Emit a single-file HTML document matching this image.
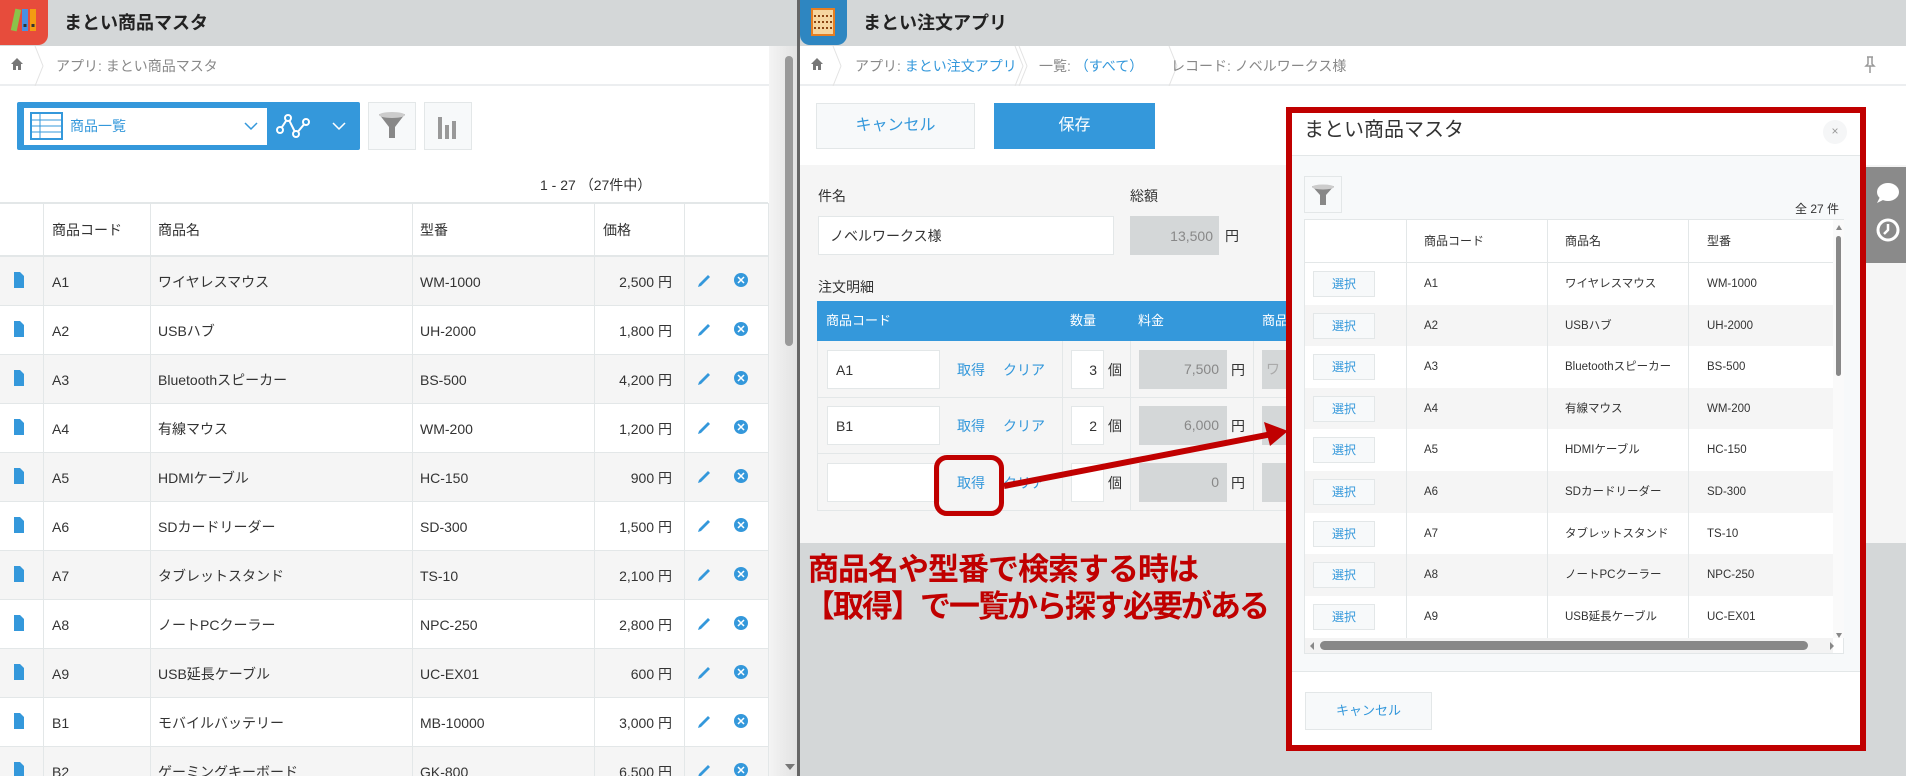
<!DOCTYPE html>
<html><head><meta charset="utf-8"><style>
*{box-sizing:border-box;margin:0;padding:0}
html{width:1906px;height:776px;overflow:hidden}
body{width:1906px;height:776px;overflow:hidden;position:relative;background:#d4d7d8;font-family:"Liberation Sans","Noto Sans CJK JP",sans-serif;color:#333;font-size:14px;line-height:20px}
#w{position:absolute;left:0;top:0;width:1906px;height:776px;overflow:hidden}
.a{position:absolute}
.hdr{background:#d4d7d8;height:46px}
.t{position:absolute;white-space:nowrap;line-height:20px}
.blue{color:#3498db}
.row{position:absolute;left:0;width:768px;height:49px}
.row .t{top:15px}
.mrow{position:absolute;left:1305px;width:528px;height:41.6px;font-size:11.5px}
.mrow .t{top:13px;line-height:16px}
.sel{position:absolute;left:8px;top:8px;width:62px;height:26px;border:1px solid #e3e7e8;background:#f7f9fa;color:#3498db;text-align:center;line-height:24px;font-size:12px}
</style></head><body><div id="w">
<!-- LEFT PANEL -->
<div class="a" style="left:0;top:0;width:797px;height:776px;background:#fff"></div>
<div class="a hdr" style="left:0;top:0;width:797px"></div>
<div class="a" style="left:0;top:0;width:48px;height:45px;background:#e74c3c;border-radius:0 0 10px 0"></div>
<svg class="a" style="left:10px;top:6px" width="30" height="30" viewBox="0 0 30 30"><rect x="3" y="3" width="6" height="22" fill="#8bc34a" transform="rotate(12 6 14)"/><rect x="12" y="3" width="6" height="22" fill="#4a90e2"/><rect x="20" y="3" width="6" height="22" fill="#f39c12"/><rect x="13.5" y="18" width="3" height="3" fill="#333"/><rect x="21.5" y="18" width="3" height="3" fill="#333"/></svg>
<div class="t" style="left:64px;top:11px;font-size:18px;font-weight:bold;color:#222;line-height:24px">まとい商品マスタ</div>
<div class="a" style="left:0;top:84px;width:784px;height:2px;background:#eceef0"></div>
<svg class="a" style="left:10px;top:57px" width="14" height="14" viewBox="0 0 14 14"><path d="M7 1L1 7h2v6h3V9h2v4h3V7h2z" fill="#777"/></svg>
<svg class="a" style="left:34px;top:46px" width="10" height="40"><path d="M1 0L9 20L1 40" stroke="#e3e3e3" fill="none"/></svg>
<div class="t" style="left:56px;top:56px;font-size:14px;color:#888">アプリ: まとい商品マスタ</div>
<div class="a" style="left:17px;top:102px;width:343px;height:48px;background:#3498db;border-radius:2px"></div>
<div class="a" style="left:24px;top:108px;width:243px;height:37px;background:#fff"></div>
<svg class="a" style="left:30px;top:112px" width="33" height="28"><rect x="1" y="1" width="31" height="26" fill="#fff" stroke="#3498db" stroke-width="2"/><path d="M1 8h31M1 14h31M1 20h31M10 1v26" stroke="#3498db"/></svg>
<div class="t blue" style="left:70px;top:116px;font-size:14px">商品一覧</div>
<svg class="a" style="left:244px;top:121px" width="14" height="10"><path d="M1 2l6 6 6-6" stroke="#3498db" fill="none" stroke-width="1.5"/></svg>
<svg class="a" style="left:276px;top:112px" width="44" height="30"><path d="M4 18L12 6L20 22L30 10" stroke="#fff" stroke-width="2" fill="none"/><circle cx="4" cy="18" r="3" fill="#3498db" stroke="#fff" stroke-width="2"/><circle cx="12" cy="6" r="3" fill="#3498db" stroke="#fff" stroke-width="2"/><circle cx="20" cy="22" r="3" fill="#3498db" stroke="#fff" stroke-width="2"/><circle cx="30" cy="10" r="3" fill="#3498db" stroke="#fff" stroke-width="2"/></svg>
<svg class="a" style="left:332px;top:121px" width="14" height="10"><path d="M1 2l6 6 6-6" stroke="#fff" fill="none" stroke-width="1.5"/></svg>
<div class="a" style="left:368px;top:102px;width:48px;height:48px;background:#f7f9fa;border:1px solid #e3e7e8"></div>
<svg class="a" style="left:376px;top:110px" width="32" height="32"><path d="M3 4h26L19 17v11h-6V17z" fill="#888"/><ellipse cx="16" cy="5" rx="13" ry="3" fill="#ccc"/></svg>
<div class="a" style="left:424px;top:102px;width:48px;height:48px;background:#f7f9fa;border:1px solid #e3e7e8"></div>
<svg class="a" style="left:436px;top:113px" width="24" height="26"><rect x="2" y="4" width="4" height="22" fill="#999"/><rect x="9" y="12" width="4" height="14" fill="#999"/><rect x="16" y="8" width="4" height="18" fill="#999"/></svg>
<div class="t" style="left:540px;top:175px;font-size:14px">1 - 27 （27件中）</div>
<!-- left table -->
<div class="a" style="left:0;top:202px;width:768px;height:2px;background:#e3e7e8"></div>
<div class="t" style="left:52px;top:220px">商品コード</div>
<div class="t" style="left:158px;top:220px">商品名</div>
<div class="t" style="left:420px;top:220px">型番</div>
<div class="t" style="left:603px;top:220px">価格</div>
<div class="a" style="left:0;top:255px;width:768px;height:2px;background:#e3e7e8"></div>
<div class="row" style="top:257px;background:#f5f5f5"><div class="t" style="left:52px">A1</div><div class="t" style="left:158px">ワイヤレスマウス</div><div class="t" style="left:420px">WM-1000</div><div class="t" style="right:96px">2,500 円</div></div>
<div class="row" style="top:306px"><div class="t" style="left:52px">A2</div><div class="t" style="left:158px">USBハブ</div><div class="t" style="left:420px">UH-2000</div><div class="t" style="right:96px">1,800 円</div></div>
<div class="row" style="top:355px;background:#f5f5f5"><div class="t" style="left:52px">A3</div><div class="t" style="left:158px">Bluetoothスピーカー</div><div class="t" style="left:420px">BS-500</div><div class="t" style="right:96px">4,200 円</div></div>
<div class="row" style="top:404px"><div class="t" style="left:52px">A4</div><div class="t" style="left:158px">有線マウス</div><div class="t" style="left:420px">WM-200</div><div class="t" style="right:96px">1,200 円</div></div>
<div class="row" style="top:453px;background:#f5f5f5"><div class="t" style="left:52px">A5</div><div class="t" style="left:158px">HDMIケーブル</div><div class="t" style="left:420px">HC-150</div><div class="t" style="right:96px">900 円</div></div>
<div class="row" style="top:502px"><div class="t" style="left:52px">A6</div><div class="t" style="left:158px">SDカードリーダー</div><div class="t" style="left:420px">SD-300</div><div class="t" style="right:96px">1,500 円</div></div>
<div class="row" style="top:551px;background:#f5f5f5"><div class="t" style="left:52px">A7</div><div class="t" style="left:158px">タブレットスタンド</div><div class="t" style="left:420px">TS-10</div><div class="t" style="right:96px">2,100 円</div></div>
<div class="row" style="top:600px"><div class="t" style="left:52px">A8</div><div class="t" style="left:158px">ノートPCクーラー</div><div class="t" style="left:420px">NPC-250</div><div class="t" style="right:96px">2,800 円</div></div>
<div class="row" style="top:649px;background:#f5f5f5"><div class="t" style="left:52px">A9</div><div class="t" style="left:158px">USB延長ケーブル</div><div class="t" style="left:420px">UC-EX01</div><div class="t" style="right:96px">600 円</div></div>
<div class="row" style="top:698px"><div class="t" style="left:52px">B1</div><div class="t" style="left:158px">モバイルバッテリー</div><div class="t" style="left:420px">MB-10000</div><div class="t" style="right:96px">3,000 円</div></div>
<div class="row" style="top:747px;height:29px;background:#f5f5f5"><div class="t" style="left:52px">B2</div><div class="t" style="left:158px">ゲーミングキーボード</div><div class="t" style="left:420px">GK-800</div><div class="t" style="right:96px">6,500 円</div></div>
<svg class="a" style="left:0;top:203px" width="769" height="573">
<g stroke="#e3e7e8"><path d="M43.5 0v573M150.5 0v573M412.5 0v573M594.5 0v573M684.5 0v573M768.5 0v573"/>
<path d="M0 102.5h768M0 151.5h768M0 200.5h768M0 249.5h768M0 298.5h768M0 347.5h768M0 396.5h768M0 445.5h768M0 494.5h768M0 543.5h768"/></g>
<g fill="#3498db">
<g transform="translate(0,69)"><path d="M14 0h6l4 4v12H14z"/><path d="M699 12l9-9 2 2-9 9-3 1z"/><circle cx="741" cy="8" r="7"/><path d="M738 5l6 6M744 5l-6 6" stroke="#fff" stroke-width="1.5"/></g>
<g transform="translate(0,118)"><path d="M14 0h6l4 4v12H14z"/><path d="M699 12l9-9 2 2-9 9-3 1z"/><circle cx="741" cy="8" r="7"/><path d="M738 5l6 6M744 5l-6 6" stroke="#fff" stroke-width="1.5"/></g>
<g transform="translate(0,167)"><path d="M14 0h6l4 4v12H14z"/><path d="M699 12l9-9 2 2-9 9-3 1z"/><circle cx="741" cy="8" r="7"/><path d="M738 5l6 6M744 5l-6 6" stroke="#fff" stroke-width="1.5"/></g>
<g transform="translate(0,216)"><path d="M14 0h6l4 4v12H14z"/><path d="M699 12l9-9 2 2-9 9-3 1z"/><circle cx="741" cy="8" r="7"/><path d="M738 5l6 6M744 5l-6 6" stroke="#fff" stroke-width="1.5"/></g>
<g transform="translate(0,265)"><path d="M14 0h6l4 4v12H14z"/><path d="M699 12l9-9 2 2-9 9-3 1z"/><circle cx="741" cy="8" r="7"/><path d="M738 5l6 6M744 5l-6 6" stroke="#fff" stroke-width="1.5"/></g>
<g transform="translate(0,314)"><path d="M14 0h6l4 4v12H14z"/><path d="M699 12l9-9 2 2-9 9-3 1z"/><circle cx="741" cy="8" r="7"/><path d="M738 5l6 6M744 5l-6 6" stroke="#fff" stroke-width="1.5"/></g>
<g transform="translate(0,363)"><path d="M14 0h6l4 4v12H14z"/><path d="M699 12l9-9 2 2-9 9-3 1z"/><circle cx="741" cy="8" r="7"/><path d="M738 5l6 6M744 5l-6 6" stroke="#fff" stroke-width="1.5"/></g>
<g transform="translate(0,412)"><path d="M14 0h6l4 4v12H14z"/><path d="M699 12l9-9 2 2-9 9-3 1z"/><circle cx="741" cy="8" r="7"/><path d="M738 5l6 6M744 5l-6 6" stroke="#fff" stroke-width="1.5"/></g>
<g transform="translate(0,461)"><path d="M14 0h6l4 4v12H14z"/><path d="M699 12l9-9 2 2-9 9-3 1z"/><circle cx="741" cy="8" r="7"/><path d="M738 5l6 6M744 5l-6 6" stroke="#fff" stroke-width="1.5"/></g>
<g transform="translate(0,510)"><path d="M14 0h6l4 4v12H14z"/><path d="M699 12l9-9 2 2-9 9-3 1z"/><circle cx="741" cy="8" r="7"/><path d="M738 5l6 6M744 5l-6 6" stroke="#fff" stroke-width="1.5"/></g>
<g transform="translate(0,559)"><path d="M14 0h6l4 4v12H14z"/><path d="M699 12l9-9 2 2-9 9-3 1z"/><circle cx="741" cy="8" r="7"/><path d="M738 5l6 6M744 5l-6 6" stroke="#fff" stroke-width="1.5"/></g>
</g></svg>
<div class="a" style="left:769px;top:46px;width:28px;height:730px;background:linear-gradient(90deg,#f4f4f4,#e2e2e2)"></div>
<div class="a" style="left:785px;top:56px;width:8px;height:290px;background:#9a9a9a;border-radius:4px"></div>
<svg class="a" style="left:784px;top:762px" width="12" height="10"><path d="M1 2h10L6 8z" fill="#777"/></svg>
<div class="a" style="left:797px;top:0;width:3px;height:776px;background:#666"></div>
<!-- RIGHT PANEL -->
<div class="a" style="left:800px;top:0;width:1106px;height:165px;background:#fff"></div>
<div class="a hdr" style="left:800px;top:0;width:1106px"></div>
<div class="a" style="left:800px;top:0;width:47px;height:45px;background:#2e86c1;border-radius:0 0 10px 10px"></div>
<svg class="a" style="left:810px;top:7px" width="26" height="30"><rect x="2" y="2" width="22" height="26" fill="#f5d6a0" stroke="#e67e22" stroke-width="2"/><path d="M4 9h18M4 15h18M4 21h18" stroke="#8b4513" stroke-width="2" stroke-dasharray="2 2"/></svg>
<div class="t" style="left:863px;top:11px;font-size:18px;font-weight:bold;color:#222;line-height:24px">まとい注文アプリ</div>
<div class="a" style="left:800px;top:84px;width:1106px;height:2px;background:#eceef0"></div>
<svg class="a" style="left:810px;top:57px" width="14" height="14" viewBox="0 0 14 14"><path d="M7 1L1 7h2v6h3V9h2v4h3V7h2z" fill="#777"/></svg>
<svg class="a" style="left:832px;top:46px" width="200" height="40"><path d="M1 0L9 20L1 40M183 0L191 20L183 40" stroke="#e3e3e3" fill="none"/></svg>
<svg class="a" style="left:1018px;top:46px" width="160" height="40"><path d="M1 0L9 20L1 40M151 0L159 20L151 40" stroke="#e3e3e3" fill="none"/></svg>
<div class="t" style="left:855px;top:56px;color:#888">アプリ: <span class="blue">まとい注文アプリ</span></div>
<div class="t" style="left:1039px;top:56px;color:#888">一覧: <span class="blue">（すべて）</span></div>
<div class="t" style="left:1171px;top:56px;color:#888">レコード: ノベルワークス様</div>
<svg class="a" style="left:1864px;top:56px" width="12" height="18"><path d="M3 1h6M4 1v7L2 10h8L8 8V1M6 10v7" stroke="#999" stroke-width="1.5" fill="none"/></svg>
<div class="a" style="left:816px;top:103px;width:159px;height:46px;background:#f7f9fa;border:1px solid #e3e7e8;color:#3498db;font-size:16px;text-align:center;line-height:44px">キャンセル</div>
<div class="a" style="left:994px;top:103px;width:161px;height:46px;background:#3498db;color:#fff;font-size:16px;text-align:center;line-height:46px">保存</div>
<div class="a" style="left:800px;top:165px;width:1106px;height:378px;background:#f5f5f5"></div>
<div class="t" style="left:818px;top:186px">件名</div>
<div class="t" style="left:1130px;top:186px">総額</div>
<div class="a" style="left:818px;top:216px;width:296px;height:39px;background:#fff;border:1px solid #e3e7e8"></div>
<div class="t" style="left:830px;top:226px">ノベルワークス様</div>
<div class="a" style="left:1130px;top:216px;width:89px;height:39px;background:#d4d7d8"></div>
<div class="t" style="left:1130px;top:226px;width:83px;text-align:right;color:#888">13,500</div>
<div class="t" style="left:1225px;top:226px">円</div>
<div class="t" style="left:818px;top:277px">注文明細</div>
<div class="a" style="left:817px;top:301px;width:472px;height:40px;background:#3498db"></div>
<div class="t" style="left:826px;top:311px;color:#fff;font-size:13px">商品コード</div>
<div class="t" style="left:1070px;top:311px;color:#fff;font-size:13px">数量</div>
<div class="t" style="left:1138px;top:311px;color:#fff;font-size:13px">料金</div>
<div class="t" style="left:1262px;top:311px;color:#fff;font-size:13px">商品</div>
<svg class="a" style="left:817px;top:341px" width="472" height="170"><g stroke="#e3e7e8" fill="none"><path d="M0.5 0v169.5h472M245.5 0v170M313.5 0v170M436.5 0v170M0 56.5h472M0 112.5h472"/></g></svg>
<div class="a" style="left:827px;top:350px;width:113px;height:39px;background:#fff;border:1px solid #e3e7e8"></div>
<div class="a" style="left:827px;top:406px;width:113px;height:39px;background:#fff;border:1px solid #e3e7e8"></div>
<div class="a" style="left:827px;top:463px;width:113px;height:39px;background:#fff;border:1px solid #e3e7e8"></div>
<div class="t" style="left:836px;top:360px">A1</div>
<div class="t" style="left:836px;top:416px">B1</div>
<div class="t blue" style="left:957px;top:360px">取得</div><div class="t blue" style="left:1003px;top:360px">クリア</div>
<div class="t blue" style="left:957px;top:416px">取得</div><div class="t blue" style="left:1003px;top:416px">クリア</div>
<div class="t blue" style="left:957px;top:473px">取得</div><div class="t blue" style="left:1003px;top:473px">クリア</div>
<div class="a" style="left:1071px;top:350px;width:33px;height:39px;background:#fff;border:1px solid #e3e7e8;text-align:right;padding:9px 6px 0 0">3</div>
<div class="a" style="left:1071px;top:406px;width:33px;height:39px;background:#fff;border:1px solid #e3e7e8;text-align:right;padding:9px 6px 0 0">2</div>
<div class="a" style="left:1071px;top:463px;width:33px;height:39px;background:#fff;border:1px solid #e3e7e8"></div>
<div class="t" style="left:1108px;top:360px">個</div><div class="t" style="left:1108px;top:416px">個</div><div class="t" style="left:1108px;top:473px">個</div>
<div class="a" style="left:1139px;top:350px;width:88px;height:39px;background:#d4d7d8;color:#888;text-align:right;padding:9px 8px 0 0">7,500</div>
<div class="a" style="left:1139px;top:406px;width:88px;height:39px;background:#d4d7d8;color:#888;text-align:right;padding:9px 8px 0 0">6,000</div>
<div class="a" style="left:1139px;top:463px;width:88px;height:39px;background:#d4d7d8;color:#888;text-align:right;padding:9px 8px 0 0">0</div>
<div class="t" style="left:1231px;top:360px">円</div><div class="t" style="left:1231px;top:416px">円</div><div class="t" style="left:1231px;top:473px">円</div>
<div class="a" style="left:1262px;top:350px;width:27px;height:39px;background:#d4d7d8;color:#aaa;padding:9px 0 0 4px;overflow:hidden">ワ</div>
<div class="a" style="left:1262px;top:406px;width:27px;height:39px;background:#d4d7d8"></div>
<div class="a" style="left:1262px;top:463px;width:27px;height:39px;background:#d4d7d8"></div>
<!-- side icons -->
<div class="a" style="left:1866px;top:167px;width:40px;height:96px;background:#8a8a8a"></div>
<svg class="a" style="left:1872px;top:180px" width="30" height="70"><ellipse cx="16" cy="12" rx="11" ry="9" fill="#fff"/><path d="M8 17l-3 6 8-4z" fill="#fff"/><circle cx="16" cy="50" r="10" fill="none" stroke="#fff" stroke-width="3"/><path d="M16 44v6l-4 4" stroke="#fff" stroke-width="2.5" fill="none"/></svg>
<!-- annotation text -->
<div class="t" style="left:808px;top:552px;font-size:31px;font-weight:bold;color:#c00000;letter-spacing:-1px;line-height:36px">商品名や型番で検索する時は</div>
<div class="t" style="left:804px;top:589px;font-size:31px;font-weight:bold;color:#c00000;letter-spacing:-2px;line-height:36px">【取得】で一覧から探す必要がある</div>
<!-- red box + arrow -->
<div class="a" style="left:934px;top:455px;width:70px;height:61px;border:5px solid #c00000;border-radius:13px"></div>
<svg class="a" style="left:1000px;top:420px" width="300" height="80"><path d="M4 66L272 14" stroke="#c00000" stroke-width="6"/><path d="M288 11L264 2L270 26z" fill="#c00000"/></svg>
<!-- MODAL -->
<div class="a" style="left:1286px;top:107px;width:580px;height:644px;background:#fff;border:6px solid #c00000"></div>
<div class="t" style="left:1304px;top:117px;font-size:20px;color:#333;line-height:26px">まとい商品マスタ</div>
<div class="a" style="left:1823px;top:120px;width:24px;height:24px;border-radius:12px;background:#f5f6f7;color:#999;text-align:center;line-height:22px;font-size:12px">×</div>
<div class="a" style="left:1292px;top:155px;width:568px;height:517px;background:#f7f9fa;border-top:1px solid #e3e7e8;border-bottom:1px solid #e3e7e8"></div>
<div class="a" style="left:1304px;top:176px;width:38px;height:37px;background:#f7f9fa;border:1px solid #e3e7e8"></div>
<svg class="a" style="left:1310px;top:182px" width="26" height="26"><path d="M2 4h22L16 13v10h-6V13z" fill="#888"/><ellipse cx="13" cy="5" rx="11" ry="2.5" fill="#ccc"/></svg>
<div class="t" style="left:1795px;top:199px;font-size:12px">全 27 件</div>
<div class="a" style="left:1304px;top:219px;width:540px;height:435px;background:#fff;border:1px solid #e3e7e8"></div>
<div class="t" style="left:1424px;top:231px;font-size:12px">商品コード</div>
<div class="t" style="left:1565px;top:231px;font-size:12px">商品名</div>
<div class="t" style="left:1707px;top:231px;font-size:12px">型番</div>
<div class="mrow" style="top:263px"><div class="sel">選択</div><div class="t" style="left:119px">A1</div><div class="t" style="left:260px">ワイヤレスマウス</div><div class="t" style="left:402px">WM-1000</div></div>
<div class="mrow" style="top:304.6px;background:#f5f5f5"><div class="sel">選択</div><div class="t" style="left:119px">A2</div><div class="t" style="left:260px">USBハブ</div><div class="t" style="left:402px">UH-2000</div></div>
<div class="mrow" style="top:346.2px"><div class="sel">選択</div><div class="t" style="left:119px">A3</div><div class="t" style="left:260px">Bluetoothスピーカー</div><div class="t" style="left:402px">BS-500</div></div>
<div class="mrow" style="top:387.8px;background:#f5f5f5"><div class="sel">選択</div><div class="t" style="left:119px">A4</div><div class="t" style="left:260px">有線マウス</div><div class="t" style="left:402px">WM-200</div></div>
<div class="mrow" style="top:429.4px"><div class="sel">選択</div><div class="t" style="left:119px">A5</div><div class="t" style="left:260px">HDMIケーブル</div><div class="t" style="left:402px">HC-150</div></div>
<div class="mrow" style="top:471px;background:#f5f5f5"><div class="sel">選択</div><div class="t" style="left:119px">A6</div><div class="t" style="left:260px">SDカードリーダー</div><div class="t" style="left:402px">SD-300</div></div>
<div class="mrow" style="top:512.6px"><div class="sel">選択</div><div class="t" style="left:119px">A7</div><div class="t" style="left:260px">タブレットスタンド</div><div class="t" style="left:402px">TS-10</div></div>
<div class="mrow" style="top:554.2px;background:#f5f5f5"><div class="sel">選択</div><div class="t" style="left:119px">A8</div><div class="t" style="left:260px">ノートPCクーラー</div><div class="t" style="left:402px">NPC-250</div></div>
<div class="mrow" style="top:595.8px"><div class="sel">選択</div><div class="t" style="left:119px">A9</div><div class="t" style="left:260px">USB延長ケーブル</div><div class="t" style="left:402px">UC-EX01</div></div>
<svg class="a" style="left:1305px;top:220px" width="540" height="420"><g stroke="#e3e7e8" fill="none"><path d="M101.5 0v418M242.5 0v418M383.5 0v418M0 42.5h528"/></g></svg>
<div class="a" style="left:1833px;top:220px;width:11px;height:418px;background:#fafafa"></div>
<div class="a" style="left:1836px;top:236px;width:5px;height:140px;background:#888;border-radius:3px"></div>
<svg class="a" style="left:1834px;top:222px" width="10" height="420"><path d="M2 8l3-5 3 5zM2 411l3 5 3-5z" fill="#888"/></svg>
<div class="a" style="left:1305px;top:638px;width:528px;height:15px;background:#f3f3f3"></div>
<div class="a" style="left:1320px;top:641px;width:488px;height:9px;background:#888;border-radius:5px"></div>
<svg class="a" style="left:1308px;top:640px" width="530" height="12"><path d="M6 2l-4 4 4 4zM522 2l4 4-4 4z" fill="#888"/></svg>
<div class="a" style="left:1305px;top:692px;width:127px;height:38px;background:#f7f9fa;border:1px solid #e3e7e8;color:#3498db;text-align:center;line-height:36px;font-size:13px">キャンセル</div>
</div></body></html>
